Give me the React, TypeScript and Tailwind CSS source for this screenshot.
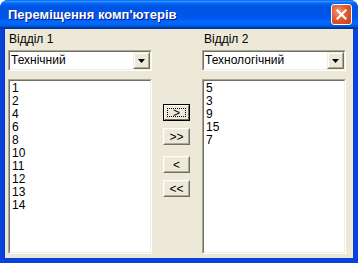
import React from "react";

function Combo({ value }: { value: string }) {
  return (
    <div className="border border-t-[#ACA899] border-l-[#ACA899] border-b-white border-r-white h-[21px] w-[144px]">
      <div className="border border-t-[#716F64] border-l-[#716F64] border-b-[#F1EFE2] border-r-[#F1EFE2] bg-white h-full flex items-center">
        <span className="flex-1 pl-[1px] text-[12px] leading-[13px] text-black">{value}</span>
        <div className="w-[17px] h-[17px] bg-[#ECE9D8] border border-t-[#F1EFE2] border-l-[#F1EFE2] border-b-[#716F64] border-r-[#716F64] flex">
          <div className="flex-1 border border-t-white border-l-white border-b-[#ACA899] border-r-[#ACA899] flex items-center justify-center">
            <svg width="7" height="4" viewBox="0 0 7 4">
              <path d="M0 0h7L3.5 4z" fill="#000" />
            </svg>
          </div>
        </div>
      </div>
    </div>
  );
}

function ListBox({ items }: { items: string[] }) {
  return (
    <div className="border border-t-[#ACA899] border-l-[#ACA899] border-b-white border-r-white w-[144px] h-[175px]">
      <div className="border border-t-[#716F64] border-l-[#716F64] border-b-[#F1EFE2] border-r-[#F1EFE2] bg-white h-full pt-[1px] pl-[2px]">
        {items.map((it) => (
          <div key={it} className="text-[12px] leading-[13px] text-black">
            {it}
          </div>
        ))}
      </div>
    </div>
  );
}

function Btn({ label, focused }: { label: string; focused?: boolean }) {
  if (focused) {
    return (
      <div className="w-[27px] h-[17px] border border-black">
        <div className="h-full border border-t-white border-l-white border-b-[#716F64] border-r-[#716F64] bg-[#ECE9D8] flex p-[2px]">
          <div className="flex-1 border border-dotted border-black flex items-center justify-center text-[12px] leading-[10px] text-black">
            {label}
          </div>
        </div>
      </div>
    );
  }
  return (
    <div className="w-[27px] h-[17px] border border-t-white border-l-white border-b-[#716F64] border-r-[#716F64] bg-[#ECE9D8]">
      <div className="h-full border border-t-[#F1EFE2] border-l-[#F1EFE2] border-b-[#ACA899] border-r-[#ACA899] flex items-center justify-center text-[12px] leading-[10px] text-black">
        {label}
      </div>
    </div>
  );
}

export default function App() {
  const left = ["1", "2", "4", "6", "8", "10", "11", "12", "13", "14"];
  const right = ["5", "3", "9", "15", "7"];
  return (
    <div className="w-[358px] h-[263px] bg-white font-['Liberation_Sans',sans-serif]">
      <div className="w-[358px] h-[263px] rounded-t-[8px] overflow-hidden flex flex-col bg-[#0842D9]">
        <div className="h-[29px] shrink-0 flex items-center pl-[8px] pr-[6px] bg-[linear-gradient(to_bottom,#0058EE_0%,#3593FF_4%,#288EFF_6%,#127DFF_8%,#036FFC_10%,#0262EE_14%,#0057E5_20%,#0054E3_24%,#0055EB_56%,#005BF5_66%,#026AFE_76%,#0062EF_86%,#0052D6_92%,#0040AB_94%,#003092_100%)]">
          <span className="flex-1 text-white font-bold text-[13px] [text-shadow:1px_1px_0_#0A1883] pt-[1px]">
            Переміщення комп'ютерів
          </span>
          <div className="w-[21px] h-[21px] rounded-[3px] border border-white bg-[radial-gradient(circle_at_35%_35%,#F09A7A_0%,#E25A30_45%,#C93D10_100%)] flex items-center justify-center">
            <svg width="11" height="11" viewBox="0 0 11 11">
              <path d="M1.5 1.5L9.5 9.5M9.5 1.5L1.5 9.5" stroke="#fff" strokeWidth="2.2" strokeLinecap="square" />
            </svg>
          </div>
        </div>
        <div className="flex-1 mx-[4px] mb-[5px] mr-[5px] bg-[#ECE9D8] border-l border-[#0831D9] flex pl-[3px] pt-[4px]">
          <div className="flex flex-col w-[144px]">
            <div className="h-[16px] pl-[1px] text-[12px] leading-[13px] text-black">Відділ 1</div>
            <div className="mt-[1px]">
              <Combo value="Технічний" />
            </div>
            <div className="mt-[8px]">
              <ListBox items={left} />
            </div>
          </div>
          <div className="w-[50px] flex flex-col pl-[11px] pt-[71px]">
            <Btn label=">" focused />
            <div className="mt-[7px]">
              <Btn label=">>" />
            </div>
            <div className="mt-[11px]">
              <Btn label="<" />
            </div>
            <div className="mt-[7px]">
              <Btn label="<<" />
            </div>
          </div>
          <div className="flex flex-col w-[144px]">
            <div className="h-[16px] pl-[2px] text-[12px] leading-[13px] text-black">Відділ 2</div>
            <div className="mt-[1px]">
              <Combo value="Технологічний" />
            </div>
            <div className="mt-[8px]">
              <ListBox items={right} />
            </div>
          </div>
        </div>
      </div>
    </div>
  );
}
